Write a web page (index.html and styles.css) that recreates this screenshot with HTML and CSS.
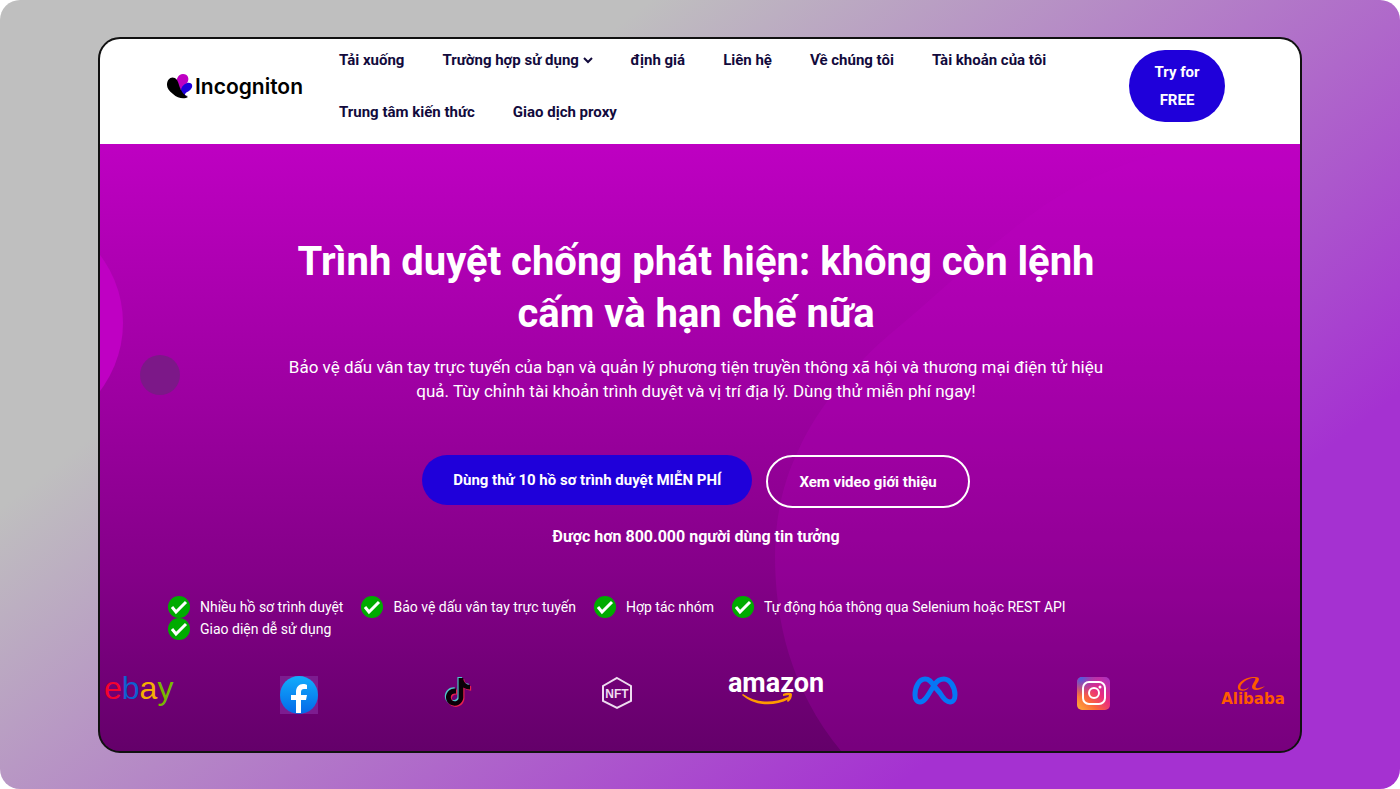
FILE: index.html
```
<!DOCTYPE html>
<html lang="vi">
<head>
<meta charset="utf-8">
<title>Incogniton</title>
<link rel="stylesheet" href="styles.css">
</head>
<body>

<div class="fondo">
  <div class="ventana">
    <header class="cabecera">
      <a class="logo" href="#">
        <svg width="26" height="25" viewBox="0 0 26 25">
          <path d="M10 13C8 6 11 0 16 0c5 0 7 5 4 9l-4 8z" fill="#bf00c3"/>
          <path d="M14 21c-1-6 1-10 6-12 4-1 7 2 4 6-2 3-6 3-6 6l3 1z" fill="#1f00da"/>
          <path d="M0 11C0 4 6 1 10 6c2 3 2 7 4 10 2 4 4 5 7 7-3 2-10 2-15-3C2 17 0 14 0 11z" fill="#000"/>
        </svg>
        <span>Incogniton</span>
      </a>
      <nav class="menu">
        <a href="#">Tải xuống</a>
        <a href="#">Trường hợp sử dụng <svg width="10" height="8" viewBox="0 0 10 8"><path d="M1 1l4 4 4-4" fill="none" stroke="#120a3c" stroke-width="2"/></svg></a>
        <a href="#">định giá</a>
        <a href="#">Liên hệ</a>
        <a href="#">Về chúng tôi</a>
        <a href="#">Tài khoản của tôi</a>
        <a href="#">Trung tâm kiến thức</a>
        <a href="#">Giao dịch proxy</a>
      </nav>
      <a class="probar" href="#">Try for FREE</a>
    </header>

    <main class="hero">
      <svg class="hero__mancha" width="526" height="607" viewBox="0 0 526 607">
        <path d="M67 607C16 545 1 475 1 412c0-38 8-74 23-105 20-45 57-88 97-121 50-42 88-80 148-124C330 22 390 4 440 0h86v607z" fill="#bf00c3" fill-opacity="0.22"/>
      </svg>
      <div class="hero__circulo"></div>
      <div class="hero__punto"></div>

      <div class="hero__contenido">
        <h1>Trình duyệt chống phát hiện: không còn lệnh cấm và hạn chế nữa</h1>
        <p class="hero__texto">Bảo vệ dấu vân tay trực tuyến của bạn và quản lý phương tiện truyền thông xã hội và thương mại điện tử hiệu quả. Tùy chỉnh tài khoản trình duyệt và vị trí địa lý. Dùng thử miễn phí ngay!</p>
        <div class="botones">
          <button class="boton boton--azul">Dùng thử 10 hồ sơ trình duyệt MIỄN PHÍ</button>
          <button class="boton boton--borde">Xem video giới thiệu</button>
        </div>
        <p class="hero__confianza">Được hơn 800.000 người dùng tin tưởng</p>
      </div>

      <ul class="ventajas">
        <li><svg width="22" height="22" viewBox="0 0 22 22"><circle cx="11" cy="11" r="11" fill="#00ab00"/><path d="M4 11l4 5L18 6" fill="none" stroke="#fff" stroke-width="3"/></svg>Nhiều hồ sơ trình duyệt</li>
        <li><svg width="22" height="22" viewBox="0 0 22 22"><circle cx="11" cy="11" r="11" fill="#00ab00"/><path d="M4 11l4 5L18 6" fill="none" stroke="#fff" stroke-width="3"/></svg>Bảo vệ dấu vân tay trực tuyến</li>
        <li><svg width="22" height="22" viewBox="0 0 22 22"><circle cx="11" cy="11" r="11" fill="#00ab00"/><path d="M4 11l4 5L18 6" fill="none" stroke="#fff" stroke-width="3"/></svg>Hợp tác nhóm</li>
        <li><svg width="22" height="22" viewBox="0 0 22 22"><circle cx="11" cy="11" r="11" fill="#00ab00"/><path d="M4 11l4 5L18 6" fill="none" stroke="#fff" stroke-width="3"/></svg>Tự động hóa thông qua Selenium hoặc REST API</li>
        <li><svg width="22" height="22" viewBox="0 0 22 22"><circle cx="11" cy="11" r="11" fill="#00ab00"/><path d="M4 11l4 5L18 6" fill="none" stroke="#fff" stroke-width="3"/></svg>Giao diện dễ sử dụng</li>
      </ul>

      <div class="marcas">
        <!-- ebay -->
        <svg width="72" height="31" viewBox="0 0 72 31">
          <text class="marca-ebay" x="0" y="23"><tspan fill="#f5022f">e</tspan><tspan fill="#0f5fd0">b</tspan><tspan fill="#f5af02">a</tspan><tspan fill="#7ab800">y</tspan></text>
        </svg>
        <!-- facebook -->
        <svg width="38" height="38" viewBox="0 0 38 38">
          <defs><linearGradient id="fb" x1="0" y1="0" x2="0" y2="1"><stop offset="0" stop-color="#12adfc"/><stop offset="1" stop-color="#0468e8"/></linearGradient></defs>
          <rect width="38" height="38" fill="#7d1c90"/>
          <circle cx="19" cy="19" r="19" fill="url(#fb)"/>
          <path d="M16 37V24h-5v-5h5v-3c0-5 3-8 7-8 2 0 3 0 4 1v4h-3c-2 0-3 1-3 3v3h6l-1 5h-5v13z" fill="#fff"/>
        </svg>
        <!-- tiktok -->
        <svg width="30" height="33" viewBox="-1 -1 26 27">
          <defs><path id="nota" d="M12.500 0h4c0 1.500.6 3.100 1.700 4.200 1.100 1.100 2.700 1.600 4.200 1.800v4c-1.400 0-2.900-.4-4.200-1-.6-.3-1.100-.6-1.600-.9v8.700c-.1 1.400-.6 2.800-1.400 4-1.300 1.900-3.600 3.100-5.900 3.200-1.400.1-2.900-.3-4.100-1-2-1.200-3.400-3.400-3.600-5.700v-1.500c.2-1.900 1.100-3.700 2.600-5 1.600-1.400 4-2.100 6.100-1.700v4.400c-1-.3-2.100-.2-3 .4-.6.4-1.100 1-1.400 1.700-.2.500-.1 1.100-.1 1.600.2 1.700 1.800 3 3.500 2.900 1.100 0 2.200-.7 2.800-1.600.2-.4.400-.7.4-1.100V0z"/></defs>
          <use href="#nota" x="-1" y="-1" fill="#4fc4c9"/>
          <use href="#nota" x="1" y="1" fill="#e8204f"/>
          <use href="#nota" fill="#0a0008"/>
        </svg>
        <!-- nft -->
        <svg width="30" height="34" viewBox="0 0 30 34">
          <path d="M15 2l14 8v15l-14 7-14-7V10z" fill="none" stroke="#eedcf0" stroke-width="2"/>
          <text class="marca-nft" x="15" y="22" text-anchor="middle">NFT</text>
        </svg>
        <!-- amazon -->
        <svg width="96" height="32" viewBox="0 0 96 32">
          <text class="marca-amazon" x="48" y="16" text-anchor="middle">amazon</text>
          <path d="M15 18c13 9 29 10 45 3l1 2c-17 9-36 6-47-4z" fill="#ff9900"/>
          <path d="M55 18c3-1 7-2 9 0 0 3-1 6-4 8l-1-1 2-6-6 1z" fill="#ff9900"/>
        </svg>
        <!-- meta -->
        <svg width="46" height="29" viewBox="0 0 46 29">
          <path d="M22 10C19 5 17 3 13 3 7 3 3 11 3 19c0 4 2 7 5 7 4 0 7-5 10-10l5-8c2-3 5-5 9-5 6 0 11 8 11 16 0 4-2 7-5 7-4 0-7-4-10-9z" fill="none" stroke="#0676f5" stroke-width="5" stroke-linejoin="round"/>
        </svg>
        <!-- instagram -->
        <svg width="34" height="34" viewBox="0 0 34 34">
          <defs>
            <linearGradient id="ig" x1="0" y1="1" x2="1" y2="0"><stop offset="0" stop-color="#fdb13b"/><stop offset="0.300" stop-color="#fb6a3a"/><stop offset="0.600" stop-color="#e82b80"/><stop offset="1" stop-color="#a432c8"/></linearGradient>
            <radialGradient id="ig2" cx="0.100" cy="0" r="0.600"><stop offset="0" stop-color="#3f62e8"/><stop offset="1" stop-color="#8a3ac8" stop-opacity="0"/></radialGradient>
          </defs>
          <rect y="1" width="33" height="33" rx="5" fill="url(#ig)"/>
          <rect y="1" width="33" height="33" rx="5" fill="url(#ig2)"/>
          <g fill="none" stroke="#fff" stroke-width="2">
            <rect x="6" y="6" width="22" height="22" rx="6"/>
            <circle cx="17" cy="17" r="5"/>
          </g>
          <circle cx="23" cy="11" r="1.500" fill="#fff"/>
        </svg>
        <!-- alibaba -->
        <svg width="70" height="30" viewBox="0 0 70 30">
          <path d="M21 14C17 9 25 1 37 1c7 0 3 5 1 8-2 4 2 4 9 1-5 5-13 5-13 1 0-3 5-8 3-9-7-1-17 7-14 11 3 1 6 0 8-2-1 3-6 5-10 3z" fill="#ff5a00"/>
          <text class="marca-alibaba" x="35" y="28" text-anchor="middle">Alibaba</text>
        </svg>
      </div>
    </main>
  </div>
</div>

</body>
</html>
```
FILE: styles.css
```
body {
	margin: 0;
	background-color: #fff;
	font-family: Roboto, sans-serif;
	font-size: 15px;
}

a {
	color: inherit;
	text-decoration: none;
}

.fondo {
	background-image: linear-gradient(142deg, #bfbfbf 27%, #a531d1 79%);
	border-radius: 20px;
	padding: 37px 7% 36px;
}

.ventana {
	background-color: #111;
	border: 2px solid #111;
	border-radius: 22px;
	overflow: hidden;
}

.cabecera {
	align-items: center;
	background-color: #fff;
	display: flex;
	padding: 5px 75px 16px 67px;
}

.logo {
	align-items: center;
	color: #000;
	display: flex;
	font-family: Inter, sans-serif;
	font-size: 21px;
	font-weight: 600;
	gap: 2px;
	width: 139px;
}

.menu {
	color: #120a3c;
	display: flex;
	flex: 1;
	flex-wrap: wrap;
	font-weight: bold;
	gap: 20px 38px;
	line-height: 32px;
	margin: 0 20px 0 33px;
}

.probar {
	background-color: #1f00da;
	border-radius: 36px;
	box-sizing: border-box;
	color: #fff;
	font-weight: bold;
	line-height: 28px;
	padding: 8px 22px;
	text-align: center;
	width: 96px;
}

.hero {
	background-image: linear-gradient(#be00c2, #9c00a0 43%, #850089 70%, #64006a);
	color: #fff;
	overflow: hidden;
	padding: 92px 0 37px;
	position: relative;
}

/* adornos del fondo */
.hero__mancha {
	bottom: 0;
	position: absolute;
	right: 0;
}

.hero__circulo {
	background-color: #bf00c3;
	border-radius: 50%;
	height: 224px;
	left: -201px;
	position: absolute;
	top: 67px;
	width: 224px;
}

.hero__punto {
	background-color: #7c1888;
	border-radius: 50%;
	height: 40px;
	left: 40px;
	position: absolute;
	top: 211px;
	width: 40px;
}

.hero__contenido {
	padding-right: 8px;
	position: relative;
	text-align: center;
}

h1 {
	font-size: 40px;
	line-height: 52px;
	margin: 0 auto;
	max-width: 840px;
}

.hero__texto {
	font-size: 17px;
	line-height: 24px;
	margin: 15px auto 52px;
	max-width: 830px;
}

.botones {
	align-items: flex-start;
	display: flex;
	gap: 14px;
	justify-content: center;
}

.boton {
	border: none;
	border-radius: 27px;
	color: #fff;
	font-family: inherit;
	font-size: 15px;
	font-weight: bold;
	height: 50px;
	padding: 0 31px;
}

.boton--azul {
	background-color: #1f00da;
}

.boton--borde {
	background-color: transparent;
	border: 2px solid #fff;
	height: 53px;
}

.hero__confianza {
	font-size: 16px;
	font-weight: bold;
	line-height: 22px;
	margin: 18px 0 48px;
}

.ventajas {
	display: flex;
	flex-wrap: wrap;
	font-size: 14px;
	gap: 0 18px;
	line-height: 22px;
	list-style: none;
	margin: 0;
	padding: 0 68px;
	position: relative;
}

.ventajas li {
	display: flex;
	gap: 10px;
}

/* la tira de marcas es mas ancha que la ventana */
.marcas {
	align-items: flex-start;
	display: grid;
	grid-template-columns: repeat(8, 1fr);
	justify-items: center;
	margin: 36px -32px 0 -40px;
	position: relative;
}

.marcas svg {
	overflow: visible;
}

.marca-ebay {
	font-family: "Liberation Sans", sans-serif;
	font-size: 32px;
}

.marca-nft {
	fill: #eedcf0;
	font-family: "Liberation Sans", sans-serif;
	font-size: 12px;
	font-weight: bold;
}

.marca-amazon {
	fill: #fff;
	font-family: Roboto, sans-serif;
	font-size: 27px;
	font-weight: bold;
}

.marca-alibaba {
	fill: #ff5a00;
	font-family: "DejaVu Sans", sans-serif;
	font-size: 15px;
	font-weight: bold;
}
```
